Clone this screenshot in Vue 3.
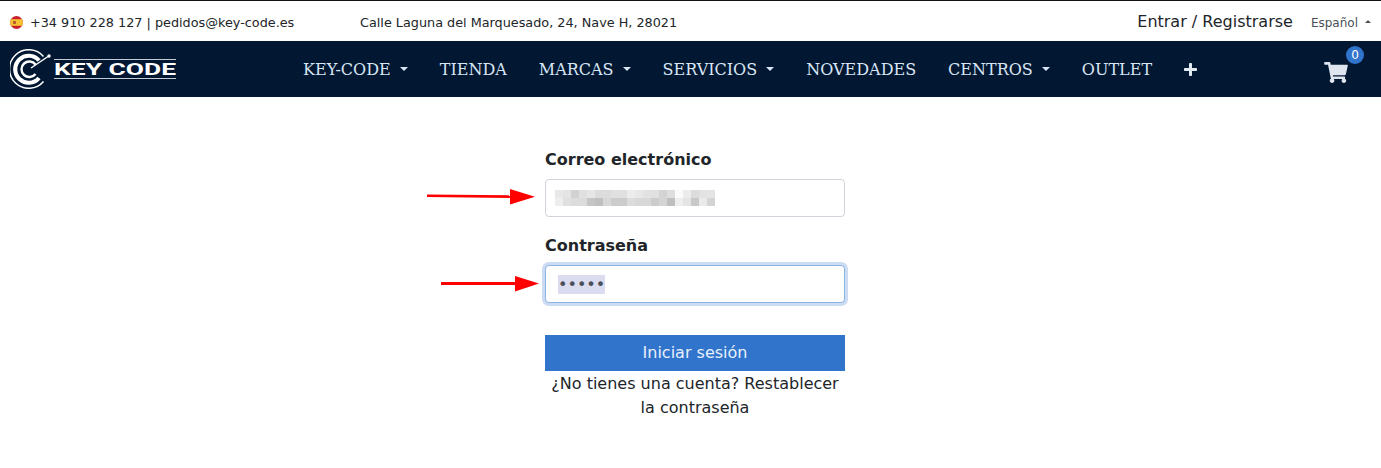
<script setup>
const links = [
  { label: 'KEY-CODE', caret: true },
  { label: 'TIENDA' },
  { label: 'MARCAS', caret: true },
  { label: 'SERVICIOS', caret: true },
  { label: 'NOVEDADES' },
  { label: 'CENTROS', caret: true },
  { label: 'OUTLET' },
]
const shades = [
  'e8','e4','d2','e0','e6','dc','dc','e0','e0','ec','e8','e2','e0','d4','de','fa','ec','dc','e2','e4',
  'ee','e0','dc','dc','c6','c0','d8','cc','cc','dc','d8','d8','cc','d4','bf','ee','e4','c8','ea','d4',
]
</script>

<template>
  <div class="page">
    <header class="topbar">
      <div class="contact">
        <svg class="flag" viewBox="0 0 13 13" aria-hidden="true">
          <defs><clipPath id="flagclip"><circle cx="6.5" cy="6.5" r="6.5" /></clipPath></defs>
          <g clip-path="url(#flagclip)">
            <rect width="13" height="13" fill="#c8202c" />
            <rect y="3.2" width="13" height="6.6" fill="#f6c232" />
            <rect x="3" y="5" width="3" height="3" rx=".8" fill="#b5562a" />
          </g>
        </svg>
        <span class="phone">+34 910 228 127 | pedidos@key-code.es</span>
        <span class="address">Calle Laguna del Marquesado, 24, Nave H, 28021</span>
      </div>
      <div class="account">
        <a class="login">Entrar / Registrarse</a>
        <a class="lang">Español<i class="caret-up"></i></a>
      </div>
    </header>

    <nav class="navbar">
      <svg class="logo" viewBox="0 0 166 40" aria-label="Key Code">
        <g fill="none" stroke="#fff">
          <path d="M33.5 7.5A19.3 19.3 0 1 0 33.5 32.5" stroke-width="1.5" />
          <path d="M29 11.5A13.5 13.5 0 1 0 29 29" stroke-width="4.2" />
          <path d="M25.5 15.5A7.8 7.8 0 1 0 25.5 25" stroke-width="2.4" />
          <path d="M21 19L38 7.5" stroke-width="1.5" />
        </g>
        <circle cx="39" cy="7" r="1.7" fill="#fff" />
        <rect x="44" y="10" width="122" height="1" fill="#c5ccd6" />
        <rect x="44" y="29" width="122" height="1" fill="#c5ccd6" />
        <text class="wordmark" x="44" y="26" textLength="122" lengthAdjust="spacingAndGlyphs">KEY CODE</text>
      </svg>

      <ul class="menu">
        <li v-for="link in links" :key="link.label" class="menu-item">
          {{ link.label }}<i v-if="link.caret" class="caret"></i>
        </li>
        <li class="menu-item">
          <svg class="plus" viewBox="0 0 13 13" aria-hidden="true">
            <path d="M5 .8Q5 0 5.8 0h1.4Q8 0 8 .8V5h4.2q.8 0 .8.8v1.4q0 .8-.8.8H8v4.2q0 .8-.8.8H5.800q-.8 0-.8-.8V8H.8Q0 8 0 7.200V5.800Q0 5 .8 5H5z" fill="#e3e9f1" />
          </svg>
        </li>
      </ul>

      <div class="cart">
        <svg class="cart-icon" viewBox="0 0 576 512" aria-hidden="true">
          <path fill="#dfe5ee" d="M528.12 301.319l47.273-208C578.806 78.301 567.391 64 551.99 64H159.208l-9.166-44.81C147.758 8.021 137.93 0 126.529 0H24C10.745 0 0 10.745 0 24v16c0 13.255 10.745 24 24 24h69.883l70.248 343.435C147.325 417.1 136 435.222 136 456c0 30.928 25.072 56 56 56s56-25.072 56-56c0-15.674-6.447-29.835-16.824-40h209.647C430.447 426.165 424 440.326 424 456c0 30.928 25.072 56 56 56s56-25.072 56-56c0-22.172-12.888-41.332-31.579-50.405l5.517-24.276c3.413-15.018-8.002-29.319-23.403-29.319H218.117l-6.545-32h293.145c11.206 0 20.92-7.754 23.403-18.681z" />
        </svg>
        <span class="badge">0</span>
      </div>
    </nav>

    <main class="main">
      <form class="form" @submit.prevent>
        <label class="label">Correo electrónico</label>
        <div class="field">
          <svg class="arrow arrow-one" viewBox="0 0 108 18" aria-hidden="true">
            <path d="M0 7.800L84 8.600" fill="none" stroke="#f00" stroke-width="2.600" />
            <path d="M83 1L108 8.700L83 16.500z" fill="#f00" />
          </svg>
          <div class="input">
            <div class="pixels">
              <span v-for="(s, i) in shades" :key="i" class="pixel" :style="{ background: '#' + s + s + s }"></span>
            </div>
          </div>
        </div>

        <label class="label second">Contraseña</label>
        <div class="field">
          <svg class="arrow arrow-two" viewBox="0 0 98 18" aria-hidden="true">
            <path d="M0 8.500H75" fill="none" stroke="#f00" stroke-width="2.800" />
            <path d="M74 1L98 8.500L74 16.500z" fill="#f00" />
          </svg>
          <div class="input focused"><span class="selected">•••••</span></div>
        </div>

        <button class="submit" type="button">Iniciar sesión</button>
        <p class="help">¿No tienes una cuenta? Restablecer la contraseña</p>
      </form>
    </main>
  </div>
</template>

<style>
html, body { margin: 0; background: #fff; }
</style>

<style scoped>
.page {
  width: 1381px;
  height: 468px;
  overflow: hidden;
  background: #fff;
  color: #212529;
  font-family: "DejaVu Sans", sans-serif;
}
.topbar {
  box-sizing: border-box;
  height: 41px;
  border-top: 1px solid #111;
  padding: 0 10px;
  display: flex;
  align-items: center;
  justify-content: space-between;
}
.contact { display: flex; align-items: center; font-size: 12.800px; padding-top: 3px; }
.flag { width: 13px; height: 13px; margin-right: 7px; }
.phone { width: 330px; }
.account { display: flex; align-items: center; }
.login { font-size: 16px; margin-right: 18px; }
.lang { font-size: 12px; color: #495057; padding-top: 4px; display: flex; align-items: center; }
.caret-up {
  margin-left: 7px;
  border-left: 3.500px solid transparent;
  border-right: 3.500px solid transparent;
  border-bottom: 3.500px solid #495057;
  margin-top: -3px;
}
.navbar {
  height: 56px;
  background: #021732;
  display: flex;
  align-items: center;
  position: relative;
  padding-left: 10px;
}
.logo { width: 166px; height: 40px; flex: none; }
.wordmark { font: 700 17px Roboto, sans-serif; fill: #fff; }
.menu {
  list-style: none;
  margin: 0 0 0 127px;
  padding: 0;
  display: flex;
  align-items: center;
  gap: 32px;
  font: 16px "DejaVu Serif", serif;
  color: #d8e6f5;
}
.menu-item { display: flex; align-items: center; white-space: nowrap; }
.caret {
  margin-left: 9px;
  border-left: 4px solid transparent;
  border-right: 4px solid transparent;
  border-top: 4px solid #d8e6f5;
}
.plus { width: 13px; height: 13px; display: block; }
.cart {
  margin-left: auto;
  margin-right: 17px;
  position: relative;
  display: flex;
  padding-right: 16px;
  padding-top: 6px;
}
.cart-icon { width: 24px; height: 21px; display: block; }
.badge {
  position: absolute;
  left: 22px;
  top: -10px;
  width: 18px;
  height: 18px;
  border-radius: 50%;
  background: #3074cc;
  color: #fff;
  font-size: 12px;
  line-height: 18px;
  text-align: center;
}
.main { padding: 51px 0 0 545px; }
.form { width: 300px; display: flex; flex-direction: column; }
.label { font-size: 16px; font-weight: 700; line-height: 24px; margin-bottom: 7px; }
.second { margin-top: 17px; }
.field { position: relative; }
.input {
  box-sizing: border-box;
  height: 38px;
  border: 1px solid #ced4da;
  border-radius: 4px;
  padding: 0 12px;
  display: flex;
  align-items: center;
  background: #fff;
  color: #495057;
  font-size: 16px;
}
.focused {
  border-color: #8db4e6;
  box-shadow: 0 0 0 3px rgba(48, 116, 204, .25);
}
.selected { background: #dcdcf0; line-height: 19px; }
.pixels {
  display: grid;
  grid-template-columns: repeat(20, 8px);
  grid-auto-rows: 8px;
  margin-left: -3px;
}
.pixel { display: block; }
.arrow { position: absolute; display: block; }
.arrow-one { left: -118px; top: 9px; width: 108px; height: 18px; }
.arrow-two { left: -104px; top: 10px; width: 98px; height: 18px; }
.submit {
  box-sizing: border-box;
  margin-top: 32px;
  height: 36px;
  border: 0;
  padding: 0 0 2px;
  background: #3074cc;
  color: #e8f0fb;
  font: 16px "DejaVu Sans", sans-serif;
}
.help { margin: 1px 0 0; text-align: center; font-size: 16px; line-height: 24px; color: #212529; }
</style>
